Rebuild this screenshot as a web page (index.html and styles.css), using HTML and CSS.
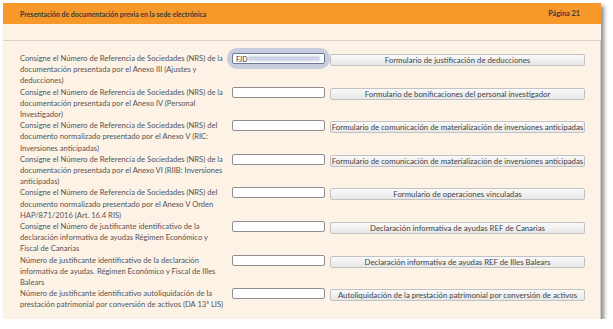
FILE: index.html
```html
<!DOCTYPE html>
<html lang="es">
<head>
    <meta charset="UTF-8">
    <title>Presentación de documentación previa</title>
    <link rel="stylesheet" href="styles.css">
</head>
<body>

<div class="panel">
    <div class="panel-header">
        <span class="panel-title">Presentación de documentación previa en la sede electrónica</span>
        <span class="panel-page">Página 21</span>
    </div>
    <div class="panel-band"></div>

    <div class="panel-content">
        <div class="row">
            <label class="row-label">Consigne el Número de Referencia de Sociedades (NRS) de la<br>documentación presentada por el Anexo III (Ajustes y<br>deducciones)</label>
            <span class="field-wrap focused">
                <input type="text" class="field" value="FJD">
                <span class="redacted"></span>
            </span>
            <button class="form-btn">Formulario de justificación de deducciones</button>
        </div>

        <div class="row">
            <label class="row-label">Consigne el Número de Referencia de Sociedades (NRS) de la<br>documentación presentada por el Anexo IV (Personal<br>Investigador)</label>
            <span class="field-wrap"><input type="text" class="field"></span>
            <button class="form-btn">Formulario de bonificaciones del personal investigador</button>
        </div>

        <div class="row">
            <label class="row-label">Consigne el Número de Referencia de Sociedades (NRS) del<br>documento normalizado presentado por el Anexo V (RIC:<br>Inversiones anticipadas)</label>
            <span class="field-wrap"><input type="text" class="field"></span>
            <button class="form-btn">Formulario de comunicación de materialización de inversiones anticipadas</button>
        </div>

        <div class="row">
            <label class="row-label">Consigne el Número de Referencia de Sociedades (NRS) de la<br>documentación presentada por el Anexo VI (RIIB: Inversiones<br>anticipadas)</label>
            <span class="field-wrap"><input type="text" class="field"></span>
            <button class="form-btn">Formulario de comunicación de materialización de inversiones anticipadas</button>
        </div>

        <div class="row">
            <label class="row-label">Consigne el Número de Referencia de Sociedades (NRS) del<br>documento normalizado presentado por el Anexo V Orden<br>HAP/871/2016 (Art. 16.4 RIS)</label>
            <span class="field-wrap"><input type="text" class="field"></span>
            <button class="form-btn">Formulario de operaciones vinculadas</button>
        </div>

        <div class="row">
            <label class="row-label">Consigne el Número de justificante identificativo de la<br>declaración informativa de ayudas Régimen Económico y<br>Fiscal de Canarias</label>
            <span class="field-wrap"><input type="text" class="field"></span>
            <button class="form-btn">Declaración informativa de ayudas REF de Canarias</button>
        </div>

        <div class="row">
            <label class="row-label">Número de justificante identificativo de la declaración<br>informativa de ayudas. Régimen Económico y Fiscal de Illes<br>Balears</label>
            <span class="field-wrap"><input type="text" class="field"></span>
            <button class="form-btn">Declaración informativa de ayudas REF de Illes Balears</button>
        </div>

        <div class="row">
            <label class="row-label">Número de justificante identificativo autoliquidación de la<br>prestación patrimonial por conversión de activos (DA 13ª LIS)</label>
            <span class="field-wrap"><input type="text" class="field"></span>
            <button class="form-btn">Autoliquidación de la prestación patrimonial por conversión de activos</button>
        </div>
    </div>
</div>

</body>
</html>
```

FILE: styles.css
```css
body {
    margin: 0;
    padding: 3px 0 0 3px;
    background-color: #ffffff;
    font-family: 'Lato', 'Liberation Sans', sans-serif;
    color: #555555;
}

.panel {
    width: 598px;
    background-color: #fdf2e6;
    box-shadow: 3px 3px 4px rgba(0, 0, 0, 0.45);
}

.panel-header {
    height: 21px;
    padding: 0 21px 0 17px;
    background-color: #f7982b;
    display: flex;
    align-items: center;
    justify-content: space-between;
    font-size: 6.9px;
    font-weight: bold;
    color: #3a3a3a;
}

.panel-page {
    font-size: 7.3px;
}

.panel-band {
    height: 16px;
}

.panel-content {
    border-top: 1px solid #dcd4ca;
    border-right: 1px solid #d6cec4;
    padding: 12px 0 8px 17px;
    display: flex;
    flex-direction: column;
}

.row {
    display: flex;
    align-items: flex-start;
    height: 33.6px;
}

.row:last-child {
    height: 22.4px;
}

.row-label {
    width: 206px;
    margin-right: 6px;
    font-size: 7.6px;
    line-height: 11.2px;
    white-space: nowrap;
}

.field-wrap {
    position: relative;
    display: block;
    width: 93px;
    height: 11px;
    margin-right: 5px;
    border-radius: 3px;
}

.field {
    box-sizing: border-box;
    display: block;
    width: 100%;
    height: 11px;
    margin: 0;
    padding: 0 3px;
    border: 1px solid #8f8f8f;
    border-radius: 2px;
    background-color: #ffffff;
    font-family: inherit;
    font-size: 7px;
    color: #333333;
    outline: none;
}

.focused {
    box-shadow: 0 0 0 5px #c8cddd;
    border-radius: 5px;
}

.focused .field {
    border-color: #6d7894;
}

/* blurred, hidden part of the reference */
.redacted {
    position: absolute;
    left: 16px;
    right: 5px;
    top: 3px;
    height: 5px;
    background-color: #c9cee2;
    filter: blur(1px);
}

.form-btn {
    box-sizing: border-box;
    width: 255px;
    height: 12px;
    margin-top: 1px;
    padding: 0;
    border: 1px solid #c2c2c2;
    border-radius: 2px;
    background: linear-gradient(#fafafa, #e7e7e7);
    font-family: inherit;
    font-size: 7.8px;
    line-height: 10px;
    color: #444444;
    text-align: center;
    white-space: nowrap;
}
```
